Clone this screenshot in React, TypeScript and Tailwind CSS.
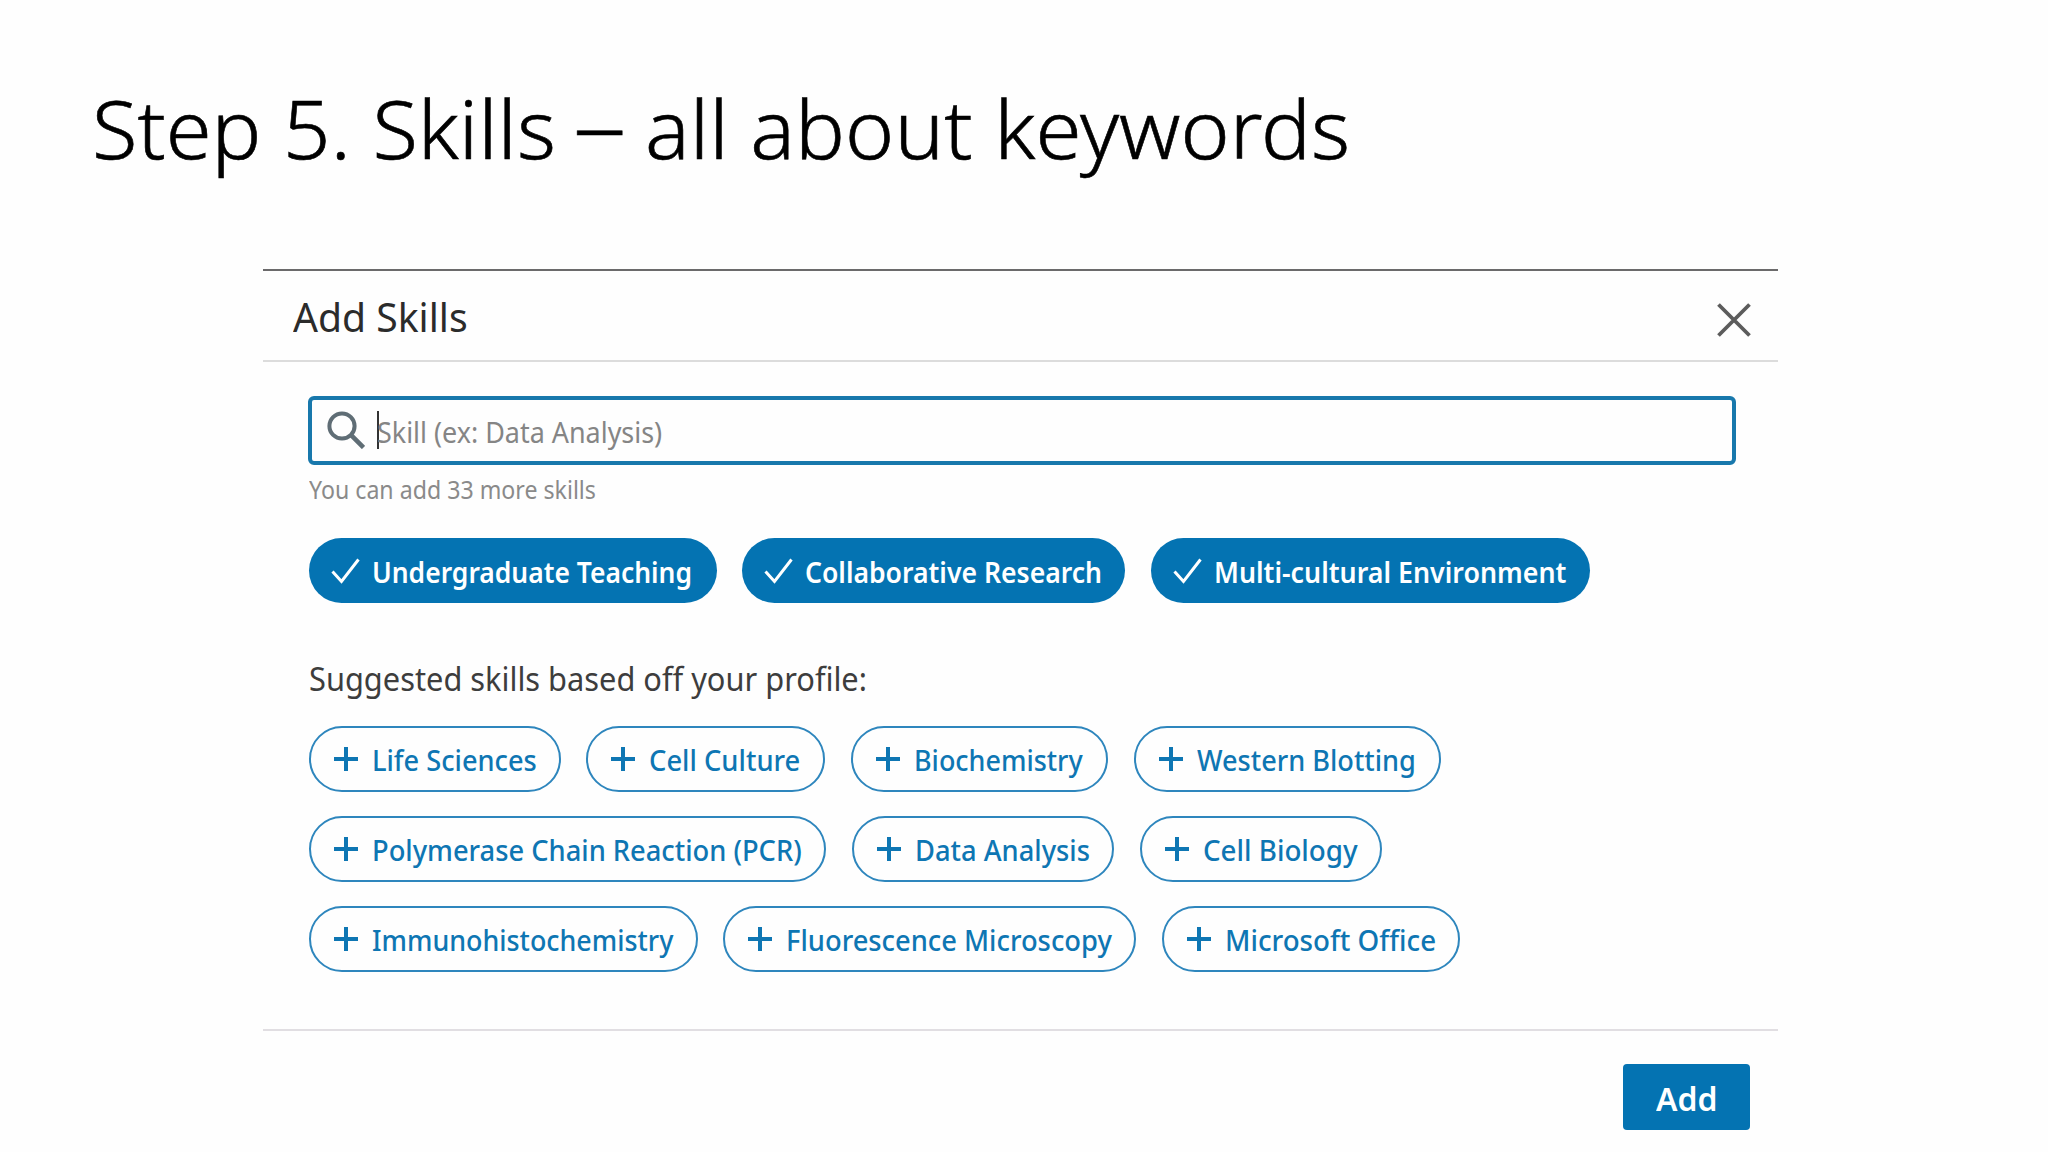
import { useLayoutEffect, useRef, useState } from "react";

/** Single line of text squeezed or stretched to fill the width of its box. */
function FitText({ text, className }: { text: string; className: string }) {
  const box = useRef<HTMLSpanElement>(null);
  const line = useRef<HTMLSpanElement>(null);
  const [scale, setScale] = useState(1);
  useLayoutEffect(() => {
    if (box.current && line.current) {
      setScale(box.current.clientWidth / line.current.offsetWidth);
    }
  }, [text]);
  return (
    <span ref={box} className={`block shrink-0 whitespace-nowrap ${className}`}>
      <span ref={line} className="inline-block origin-left" style={{ transform: `scaleX(${scale})` }}>
        {text}
      </span>
    </span>
  );
}

type Skill = { name: string; pill: string; label: string };

const selected: Skill[] = [
  { name: "Undergraduate Teaching", pill: "w-[408px]", label: "w-[320px]" },
  { name: "Collaborative Research", pill: "w-[383px] ml-[25px]", label: "w-[297px]" },
  { name: "Multi-cultural Environment", pill: "w-[439px] ml-[26px]", label: "w-[352px]" },
];

const suggested: Skill[][] = [
  [
    { name: "Life Sciences", pill: "w-[252px]", label: "w-[165px]" },
    { name: "Cell Culture", pill: "w-[239px] ml-[25px]", label: "w-[151px]" },
    { name: "Biochemistry", pill: "w-[257px] ml-[26px]", label: "w-[169px]" },
    { name: "Western Blotting", pill: "w-[307px] ml-[26px]", label: "w-[219px]" },
  ],
  [
    { name: "Polymerase Chain Reaction (PCR)", pill: "w-[517px]", label: "w-[430px]" },
    { name: "Data Analysis", pill: "w-[262px] ml-[26px]", label: "w-[175px]" },
    { name: "Cell Biology", pill: "w-[242px] ml-[26px]", label: "w-[155px]" },
  ],
  [
    { name: "Immunohistochemistry", pill: "w-[389px]", label: "w-[301px]" },
    { name: "Fluorescence Microscopy", pill: "w-[413px] ml-[25px]", label: "w-[326px]" },
    { name: "Microsoft Office", pill: "w-[298px] ml-[26px]", label: "w-[211px]" },
  ],
];

function SelectedPill({ name, pill, label }: Skill) {
  return (
    <button className={`flex h-[65px] shrink-0 items-center rounded-full bg-[#0473b2] pl-[22px] text-white ${pill}`}>
      <svg className="h-[26px] w-[30px] shrink-0" viewBox="0 0 30 26" fill="none" stroke="currentColor" strokeWidth="3">
        <path d="M1.5 13.5 10.5 23.5 27.5 1.5" />
      </svg>
      <FitText text={name} className={`ml-[11px] pt-[3px] text-left text-[29px] leading-[40px] font-semibold ${label}`} />
    </button>
  );
}

function SuggestedPill({ name, pill, label }: Skill) {
  return (
    <button className={`flex h-[66px] shrink-0 items-center rounded-full border-2 border-[#2e86bd] pl-[22px] text-[#0e76b3] ${pill}`}>
      <svg className="h-[26px] w-[26px] shrink-0" viewBox="0 0 26 26" fill="none" stroke="currentColor" strokeWidth="4">
        <path d="M13 1v24M1 13h24" />
      </svg>
      <FitText text={name} className={`ml-[13px] pt-[2px] text-left text-[29px] leading-[40px] font-medium ${label}`} />
    </button>
  );
}

export default function App() {
  return (
    <main className="h-[1152px] w-[2048px] overflow-hidden bg-[#fefefe] font-['Noto_Sans','Open_Sans',sans-serif]">
      <h1 className="flex h-[269px] pt-[68px] pl-[92px] text-[81px] leading-[120px] font-light text-black [-webkit-text-stroke:0.6px_black]">
        <FitText text="Step 5. Skills" className="w-[464px]" />
        <FitText text="–" className="-mt-[4px] ml-[17px] w-[54px]" />
        <FitText text="all about keywords" className="ml-[18px] w-[705px]" />
      </h1>

      <section className="ml-[263px] w-[1515px] border-t-2 border-[#6b6a6b]">
        <header className="flex h-[91px] items-center justify-between border-b-2 border-[#dcdcdc] pr-[27px] pl-[30px]">
          <FitText text="Add Skills" className="w-[175px] pt-[3px] text-[40px] leading-[56px] text-[#2b2b2b]" />
          <svg className="mt-[9px] h-[34px] w-[34px]" viewBox="0 0 34 34" fill="none" stroke="#5c5c5c" strokeWidth="3.8">
            <path d="M1.5 1.5 32.5 32.5M32.5 1.5 1.5 32.5" />
          </svg>
        </header>

        <div className="h-[667px] pt-[34px] pl-[45px]">
          <div className="flex h-[69px] w-[1428px] items-center rounded-[6px] border-4 border-[#1878ac] pl-[15px]">
            <svg className="mb-[2px] h-[38px] w-[38px] shrink-0" viewBox="0 0 38 38" fill="none" stroke="#5f6d75" strokeWidth="4">
              <circle cx="15" cy="15" r="12.6" />
              <path d="M23.6 23.6 36.5 36.5" strokeWidth="4.6" />
            </svg>
            <span className="mb-px ml-[12px] h-[38px] w-[2px] bg-[#333333]" />
            <FitText text="Skill (ex: Data Analysis)" className="-ml-[2px] w-[285px] pt-[2px] text-[29px] leading-[40px] text-[#858585]" />
          </div>
          <FitText text="You can add 33 more skills" className="mt-[7px] ml-[1px] w-[287px] text-[25px] leading-[34px] text-[#8a8a8a]" />

          <div className="mt-[32px] ml-px flex">
            {selected.map((s) => (
              <SelectedPill key={s.name} {...s} />
            ))}
          </div>

          <FitText
            text="Suggested skills based off your profile:"
            className="mt-[54px] ml-px w-[558px] text-[32px] leading-[44px] text-[#3d3d3d]"
          />

          <div className="mt-[25px] ml-px flex flex-col gap-[24px]">
            {suggested.map((row) => (
              <div key={row[0].name} className="flex">
                {row.map((s) => (
                  <SuggestedPill key={s.name} {...s} />
                ))}
              </div>
            ))}
          </div>
        </div>

        <footer className="flex justify-end border-t-2 border-[#e1dee2] pt-[33px] pr-[28px]">
          <button className="flex h-[66px] w-[127px] items-center justify-center rounded-[4px] bg-[#0473b2] text-white">
            <FitText text="Add" className="w-[62px] pt-[4px] text-left text-[33px] leading-[44px] font-semibold" />
          </button>
        </footer>
      </section>
    </main>
  );
}
